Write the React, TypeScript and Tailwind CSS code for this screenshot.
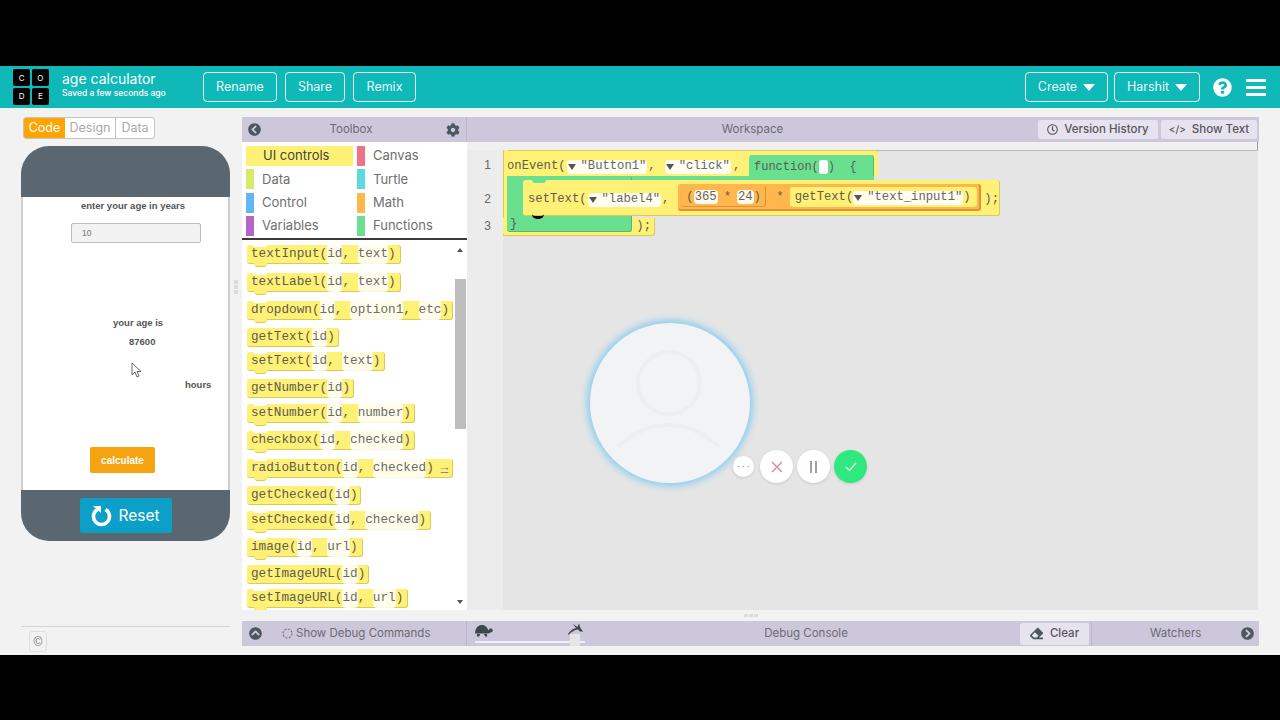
import React from 'react';
import {
  FaChevronCircleLeft,
  FaChevronCircleRight,
  FaChevronCircleUp,
  FaCog,
  FaEraser,
  FaQuestionCircle,
  FaRegClock,
} from 'react-icons/fa';

const UI = "font-['Inter','Noto_Sans',sans-serif]";
const MONO = "font-['Liberation_Mono',monospace]";
const ARIAL = "font-['Liberation_Sans',Arial,sans-serif]";

const categories = [
  { label: 'UI controls', swatch: 'bg-[#fff176]', selected: true },
  { label: 'Canvas', swatch: 'bg-[#f0718a]' },
  { label: 'Data', swatch: 'bg-[#d4ec6a]' },
  { label: 'Turtle', swatch: 'bg-[#5cdae0]' },
  { label: 'Control', swatch: 'bg-[#64b5f6]' },
  { label: 'Math', swatch: 'bg-[#ffb74d]' },
  { label: 'Variables', swatch: 'bg-[#b565c9]' },
  { label: 'Functions', swatch: 'bg-[#68e090]' },
];

const blocks = [
  { name: 'textInput', args: ['id', 'text'], mt: 'mt-0', w: 'w-[154px]', statement: true },
  { name: 'textLabel', args: ['id', 'text'], mt: 'mt-[9px]', w: 'w-[154px]', statement: true },
  { name: 'dropdown', args: ['id', 'option1', 'etc'], mt: 'mt-[9px]', w: 'w-[206px]', statement: true },
  { name: 'getText', args: ['id'], mt: 'mt-[8px]', w: 'w-[92px]' },
  { name: 'setText', args: ['id', 'text'], mt: 'mt-[5px]', w: 'w-[138px]', statement: true },
  { name: 'getNumber', args: ['id'], mt: 'mt-[8px]', w: 'w-[107px]' },
  { name: 'setNumber', args: ['id', 'number'], mt: 'mt-[6px]', w: 'w-[168px]', statement: true },
  { name: 'checkbox', args: ['id', 'checked'], mt: 'mt-[8px]', w: 'w-[168px]', statement: true },
  { name: 'radioButton', args: ['id', 'checked'], mt: 'mt-[9px]', w: 'w-[206px]', statement: true, more: true },
  { name: 'getChecked', args: ['id'], mt: 'mt-[8px]', w: 'w-[114px]' },
  { name: 'setChecked', args: ['id', 'checked'], mt: 'mt-[6px]', w: 'w-[184px]', statement: true },
  { name: 'image', args: ['id', 'url'], mt: 'mt-[8px]', w: 'w-[116px]', statement: true },
  { name: 'getImageURL', args: ['id'], mt: 'mt-[8px]', w: 'w-[122px]' },
  { name: 'setImageURL', args: ['id', 'url'], mt: 'mt-[5px]', w: 'w-[161px]', statement: true },
];

const Logo = () => (
  <div className={`grid grid-cols-2 gap-[1.5px] w-[36px] ${UI}`}>
    {['C', 'O', 'D', 'E'].map((l) => (
      <div key={l} className="h-[17px] bg-black rounded-[2px] flex items-center justify-center text-white text-[8px]">
        {l}
      </div>
    ))}
  </div>
);

const Caret = () => <span className="border-x-[6.500px] border-x-transparent border-t-[7px] border-t-white rounded-[1px]" />;

const HeaderButton = ({ children, className }: { children: React.ReactNode; className: string }) => (
  <div className={`h-[30px] border border-white/90 rounded-[4px] flex items-center justify-center gap-[6px] text-[12.5px] text-white/95 ${className}`}>
    {children}
  </div>
);

const Header = () => (
  <header className={`h-[42px] bg-[#0fb9b8] flex items-center pl-[13px] pr-[14px] ${UI}`}>
    <Logo />
    <div className="ml-[13px] w-[141px] text-white">
      <div className="text-[14px] leading-[16px] -mt-[4px]">age calculator</div>
      <div className="text-[8.5px] leading-[12px] font-medium">Saved a few seconds ago</div>
    </div>
    <div className="flex gap-[8px]">
      <HeaderButton className="w-[74px]">Rename</HeaderButton>
      <HeaderButton className="w-[60px]">Share</HeaderButton>
      <HeaderButton className="w-[63px]">Remix</HeaderButton>
    </div>
    <div className="ml-auto flex items-center">
      <HeaderButton className="w-[83px]">
        Create <Caret />
      </HeaderButton>
      <HeaderButton className="w-[86px] ml-[6px]">
        Harshit <Caret />
      </HeaderButton>
      <FaQuestionCircle className="ml-[13px] text-[19px] text-white" />
      <div className="ml-[14px] w-[20px] flex flex-col gap-[4px]">
        <div className="h-[3px] bg-white" />
        <div className="h-[3px] bg-white" />
        <div className="h-[3px] bg-white" />
      </div>
    </div>
  </header>
);

const AppPreview = () => (
  <div className={`w-[209px] h-[395px] ml-[21px] mt-[7px] flex flex-col rounded-[28px] overflow-hidden ${ARIAL}`}>
    <div className="h-[51px] bg-[#5b6770]" />
    <div className="relative h-[293px] bg-white border-x-2 border-[#cfcfcf] font-bold text-[#555]">
      <div className="absolute left-[58px] top-[3px] text-[9.5px] leading-[12px] whitespace-nowrap">enter your age in years</div>
      <div className="absolute left-[48px] top-[26px] w-[130px] h-[20px] bg-[#f2f2f2] border border-[#bdbdbd] rounded-[2px] text-[8.5px] font-normal text-[#777] leading-[18px] pl-[10px]">
        10
      </div>
      <div className="absolute left-[90px] top-[120px] text-[9.5px] leading-[12px] whitespace-nowrap">your age is</div>
      <div className="absolute left-[106px] top-[139px] text-[9.5px] leading-[12px]">87600</div>
      <div className="absolute left-[162px] top-[182px] text-[9.5px] leading-[12px]">hours</div>
      <svg className="absolute left-[108px] top-[165px]" width="12" height="16" viewBox="0 0 12 16">
        <path d="M1 1v12l3-3 2 5 2-1-2-4.500h4z" fill="#fff" stroke="#444" strokeWidth="0.8" />
      </svg>
      <div className="absolute left-[67px] top-[250px] w-[65px] h-[26px] bg-[#f5a40f] rounded-[2px] text-white text-[10px] flex items-center justify-center">
        calculate
      </div>
    </div>
    <div className="h-[51px] bg-[#5b6770] flex justify-center pt-[8px]">
      <div className={`w-[92px] h-[35px] bg-[#0ca0c9] rounded-[2px] flex items-center gap-[7px] pl-[11px] text-white text-[15.5px] ${UI}`}>
        <svg width="21" height="23" viewBox="0 0 21 23">
          <path d="M6.500 5.500a8 8 0 1 0 8 0" fill="none" stroke="#fff" strokeWidth="3.600" />
          <path d="M2 2h8v7z" fill="#fff" />
        </svg>
        Reset
      </div>
    </div>
  </div>
);

const LeftColumn = () => (
  <div className="relative w-[242px] shrink-0 flex flex-col">
    <div className={`ml-[23px] mt-[9px] w-[132px] h-[22px] flex rounded-[3px] border border-[#c4c4c4] bg-white text-[12.5px] overflow-hidden ${UI}`}>
      <div className="w-[41px] bg-[#ffa400] text-white flex items-center justify-center">Code</div>
      <div className="w-[51px] text-[#a9a9a9] border-r border-[#c4c4c4] flex items-center justify-center">Design</div>
      <div className="flex-1 text-[#a9a9a9] flex items-center justify-center">Data</div>
    </div>
    <AppPreview />
    <div className="absolute left-[234px] top-[172px] flex flex-col gap-[1px]">
      <div className="w-[4px] h-[4px] bg-[#dcdcdc]" />
      <div className="w-[4px] h-[4px] bg-[#dcdcdc]" />
      <div className="w-[4px] h-[4px] bg-[#dcdcdc]" />
    </div>
    <div className="mt-[85px] ml-[21px] w-[209px] border-t border-[#d4d4d4]" />
    <div className={`ml-[29px] mt-[4px] w-[18px] h-[21px] border border-[#dedede] rounded-[3px] flex items-center justify-center text-[12px] text-[#777] ${ARIAL}`}>
      ©
    </div>
  </div>
);

const Block = ({ block }: { block: (typeof blocks)[number] }) => (
  <div className={`relative h-[19px] bg-[#fff176] rounded-[3px] border-b border-r border-[#d8cb5a] flex items-center pl-[4px] whitespace-nowrap ${block.w} ${block.mt}`}>
    {block.statement && <div className="absolute left-[6px] top-0 w-[14px] h-[2px] bg-white rounded-b-[3px]" />}
    {block.statement && <div className="absolute left-[7px] -bottom-[4px] w-[13px] h-[4px] bg-[#fff176] border-b border-[#d8cb5a] rounded-b-[4px]" />}
    {block.name}(
    {block.args.map((a, i) => (
      <React.Fragment key={a}>
        {i > 0 && <span>,&nbsp;</span>}
        <span className="bg-white/85 rounded-[4px] text-[#6b6b6b]">{a}</span>
      </React.Fragment>
    ))}
    )
    {block.more && <span className="ml-[7px] underline text-[#888]">→</span>}
  </div>
);

const Toolbox = () => (
  <div className="w-[225px] shrink-0 flex flex-col">
    <div className={`h-[25px] bg-[#cdc7dc] border-r border-[#bcb5cd] flex items-center px-[6px] text-[11.5px] text-[#6b6b74] ${UI}`}>
      <FaChevronCircleLeft className="text-[13px] text-[#4d575f]" />
      <span className="flex-1 text-center pr-[5px]">Toolbox</span>
      <FaCog className="text-[14px] text-[#4d575f]" />
    </div>
    <div className={`h-[98px] bg-white border-b-2 border-[#3a3a3a] grid grid-cols-[111px_110px] auto-rows-[20px] gap-y-[3.300px] pl-[4px] pt-[4px] text-[13px] text-[#6f6f6f] ${UI}`}>
      {categories.map((c) =>
        c.selected ? (
          <div key={c.label} className={`w-[107px] flex items-center pl-[17px] text-[#444] ${c.swatch}`}>
            {c.label}
          </div>
        ) : (
          <div key={c.label} className="flex items-center">
            <div className={`w-[8px] h-[20px] ${c.swatch}`} />
            <span className="ml-[8px]">{c.label}</span>
          </div>
        ),
      )}
    </div>
    <div className={`relative flex-1 bg-white overflow-hidden pl-[5px] pt-[5px] text-[12.700px] text-[#5d5d50] ${MONO}`}>
      {blocks.map((b) => (
        <Block key={b.name} block={b} />
      ))}
      <div className="absolute right-[1px] top-0 bottom-0 w-[11px] bg-white">
        <div className="absolute left-[2px] top-[8px] border-x-[3.500px] border-x-transparent border-b-[4px] border-b-[#555]" />
        <div className="absolute left-0 top-[39px] w-[11px] h-[150px] bg-[#bdbdbd]" />
        <div className="absolute left-[2px] bottom-[6px] border-x-[3.500px] border-x-transparent border-t-[4px] border-t-[#555]" />
      </div>
    </div>
  </div>
);

const Pill = ({ children }: { children: React.ReactNode }) => (
  <span className="bg-white/90 rounded-[4px] text-[#666] flex items-center h-[14px] px-[1px]">{children}</span>
);

const Dropdown = ({ children }: { children: React.ReactNode }) => (
  <Pill>
    <span className="mr-[5px] border-x-[4px] border-x-transparent border-t-[6px] border-t-[#555]" />
    {children}
  </Pill>
);

const Canvas = () => (
  <div className={`relative flex-1 bg-[#f0f0f0] overflow-hidden text-[12.200px] text-[#5d5d50] ${MONO}`}>
    <div className="absolute left-[36px] top-[8px] bottom-0 right-[1px] bg-[#e5e5e5] border-t border-[#bdbdbd]" />
    <div className="absolute right-[1px] top-0 w-[1px] h-[8px] bg-[#9a9a9a]" />
    <div className={`absolute left-0 top-[8px] bottom-0 w-[36px] bg-[#ececec] text-[#666] text-[12px] ${ARIAL}`}>
      <div className="absolute right-[12px] top-[6px]">1</div>
      <div className="absolute right-[12px] top-[40px]">2</div>
      <div className="absolute right-[12px] top-[67px]">3</div>
    </div>

    {/* onEvent statement */}
    <div className="absolute left-[36px] top-[8px] w-[375px] h-[26px] bg-[#fff176] border-t border-[#d8cb5a] rounded-t-[3px] flex items-center pl-[4px] pt-[6px] whitespace-nowrap">
      onEvent(
      <span className="ml-[1px]"><Dropdown>"Button1"</Dropdown></span>
      <span className="ml-[1px] mr-[9px]">,</span>
      <Dropdown>"click"</Dropdown>
      <span className="ml-[2px]">,</span>
    </div>
    <div className="absolute left-[36px] top-[8px] w-[5px] h-[86px] bg-[#fff176] border-l border-[#d8cb5a]" />
    <div className="absolute left-[36px] top-[76px] w-[152px] h-[18px] bg-[#fff176] border-b border-r border-[#d8cb5a] rounded-b-[3px] flex items-center justify-end pr-[3px]">
      );
    </div>

    {/* function body */}
    <div className="absolute left-[282px] top-[13px] w-[125px] h-[25px] bg-[#68e090] border-b border-r border-[#4fbb74] rounded-[3px] flex items-center pl-[5px] text-[12px] whitespace-nowrap">
      function(
      <span className="w-[9px] h-[14px] bg-white rounded-[3px]" />
      )&nbsp;&nbsp;{'{'}
    </div>
    <div className="absolute left-[40px] top-[34px] w-[367px] h-[5px] bg-[#68e090]" />
    <div className="absolute left-[40px] top-[34px] w-[125px] h-[56px] bg-[#68e090] border-b border-r border-[#4fbb74] rounded-[3px] flex items-end pl-[3px] leading-[14px]">
      {'}'}
    </div>

    {/* setText statement */}
    <div className="absolute left-[56px] top-[38px] w-[477px] h-[36px] bg-[#fff176] border-b border-r border-[#d8cb5a] rounded-[3px] flex items-center pl-[5px] pt-[4px] whitespace-nowrap">
      setText(
      <span className="ml-[1px]"><Dropdown>"label4"</Dropdown></span>
      <span className="ml-[1px] mr-[9px]">,</span>
      <div className="-mt-[4px] h-[27px] w-[304px] bg-[#ffb74d] border-b-2 border-r-2 border-[#e0923a] rounded-[3px] flex items-center pl-[3px]">
        <div className="h-[21px] w-[85px] bg-[#ffb74d] border-b border-r border-[#e0923a] rounded-[3px] flex items-center pl-[5px] pt-[2px]">
          (<Pill>365</Pill>
          <span className="mx-[6px]">*</span>
          <Pill>24</Pill>)
        </div>
        <span className="ml-[10px] pt-[2px]">*</span>
        <div className="ml-[6px] h-[20px] w-[187px] bg-[#fff176] rounded-[3px] flex items-center pl-[5px] pt-[2px]">
          getText(
          <Dropdown>"text_input1"</Dropdown>)
        </div>
      </div>
      <span className="ml-[3px]">);</span>
    </div>
    <div className="absolute left-[65px] top-[72px] w-[12px] h-[5px] border-b-[3px] border-black rounded-b-full" />
    <div className="absolute left-[65px] top-[38px] w-[14px] h-[3px] bg-[#68e090] rounded-b-[4px]" />

    {/* avatar overlay */}
    <div className="absolute left-[123px] top-[181px] w-[160px] h-[160px] rounded-full bg-[#f2f3f5] shadow-[0_0_7px_3px_#8ccdf0] overflow-hidden">
      <svg width="160" height="160" viewBox="0 0 160 160" fill="none" stroke="#edeef1" strokeWidth="4">
        <circle cx="79" cy="60" r="31" />
        <path d="M27 124Q78 80 130 124" />
      </svg>
    </div>
    <div className="absolute left-[266px] top-[314px] w-[21px] h-[21px] rounded-full bg-white shadow-[0_1px_3px_#0002] flex items-center justify-center text-[#777] text-[8px] leading-none">
      ···
    </div>
    <div className="absolute left-[293px] top-[308px] w-[33px] h-[33px] rounded-full bg-white shadow-[0_1px_3px_#0002] flex items-center justify-center">
      <svg width="12" height="12" viewBox="0 0 12 12" stroke="#e58aa0" strokeWidth="1.500">
        <path d="M1 1l10 10M11 1L1 11" />
      </svg>
    </div>
    <div className="absolute left-[330px] top-[308px] w-[33px] h-[33px] rounded-full bg-white shadow-[0_1px_3px_#0002] flex items-center justify-center gap-[3px]">
      <div className="w-[2px] h-[12px] bg-[#9aa3ad]" />
      <div className="w-[2px] h-[12px] bg-[#9aa3ad]" />
    </div>
    <div className="absolute left-[367px] top-[308px] w-[33px] h-[33px] rounded-full bg-[#2fe87e] shadow-[0_1px_3px_#0002] flex items-center justify-center">
      <svg width="12" height="10" viewBox="0 0 12 10" fill="none" stroke="#d8f8e4" strokeWidth="1.500">
        <path d="M1 5l3.500 3.500L11 1" />
      </svg>
    </div>
  </div>
);

const Workspace = () => (
  <div className="flex-1 flex flex-col">
    <div className={`h-[25px] bg-[#cdc7dc] flex items-center pr-[2px] text-[11.500px] text-[#6b6b74] ${UI}`}>
      <span className="flex-1 text-center">Workspace</span>
      <div className="w-[120px] h-[19px] bg-[#e6e3ee] rounded-[2px] flex items-center justify-center gap-[6px] text-[#55555e] font-medium">
        <FaRegClock className="text-[11px]" /> Version History
      </div>
      <div className="ml-[3px] w-[96px] h-[19px] bg-[#e6e3ee] rounded-[2px] flex items-center justify-center gap-[6px] text-[#55555e] font-medium">
        <span className="text-[10px]">{'</>'}</span> Show Text
      </div>
    </div>
    <Canvas />
  </div>
);

const Turtle = () => (
  <svg className="absolute left-[7px] top-[3px]" width="19" height="13" viewBox="0 0 19 13" fill="#3f474e">
    <path d="M1 9C1.500 3.500 4.500 1 8 1s5.500 2.500 6.500 5.500c.5-1.500 1.500-2 2.500-2 1.200 0 1.800 1 1.800 2s-1 1.800-2.300 2c-.7.700-1.500 1-2.500 1H1z" />
    <path d="M3 10h3l-.6 2.500H3zM10 10h3l.3 2.500H11z" />
  </svg>
);

const Rabbit = () => (
  <svg className="absolute left-[100px] top-[2px]" width="17" height="13" viewBox="0 0 17 13" fill="#3f474e">
    <path d="M1 11C3 7.500 6 5.500 9 5L6 1l4.500 3L12 0.500 13.500 5l2.500 3.500h-3L11 6.500C7.500 7 4.500 8.500 1.500 12z" />
  </svg>
);

const DebugBar = () => (
  <div className={`h-[25px] bg-[#cdc7dc] flex items-center text-[11.500px] text-[#6b6b74] ${UI}`}>
    <div className="w-[225px] h-full shrink-0 border-r border-[#bcb5cd] flex items-center pl-[7px]">
      <FaChevronCircleUp className="text-[13px] text-[#4d575f]" />
      <svg className="ml-[20px]" width="11" height="11" viewBox="0 0 11 11" fill="none" stroke="#777" strokeWidth="1.200" strokeDasharray="2 1.500">
        <circle cx="5.500" cy="5.500" r="4.500" />
      </svg>
      <span className="ml-[3px] whitespace-nowrap">Show Debug Commands</span>
    </div>
    <div className="relative w-[130px] h-full shrink-0">
      <Turtle />
      <div className="absolute left-[8px] top-[20px] w-[110px] h-[2px] bg-[#f0eef5]" />
      <div className="absolute left-[103px] top-[13px] w-[10px] h-[12px] bg-[#e6e4ea]" />
      <Rabbit />
    </div>
    <span className="w-[418px] text-center">Debug Console</span>
    <div className="ml-[5px] w-[69px] h-[22px] bg-[#e6e3ee] rounded-[2px] flex items-center justify-center gap-[7px] text-[#55555e] font-medium">
      <FaEraser className="text-[13px] text-[#4d575f]" /> Clear
    </div>
    <div className="flex-1 h-full ml-[2px] border-l border-[#bcb5cd] flex items-center pl-[58px]">
      <span>Watchers</span>
      <FaChevronCircleRight className="ml-[40px] text-[13px] text-[#4d575f]" />
    </div>
  </div>
);

export default function App() {
  return (
    <div className="w-[1280px] h-[720px] bg-black pt-[66px] overflow-hidden">
      <Header />
      <main className="h-[547px] bg-[#f2f2f2] flex">
        <LeftColumn />
        <div className="w-[1017px] pt-[9px] flex flex-col">
          <div className="h-[493px] flex">
            <Toolbox />
            <Workspace />
          </div>
          <div className="h-[11px] flex items-center justify-center gap-[1px]">
            <div className="w-[4px] h-[3px] bg-[#dcdcdc]" />
            <div className="w-[4px] h-[3px] bg-[#dcdcdc]" />
            <div className="w-[4px] h-[3px] bg-[#dcdcdc]" />
          </div>
          <DebugBar />
        </div>
      </main>
    </div>
  );
}
